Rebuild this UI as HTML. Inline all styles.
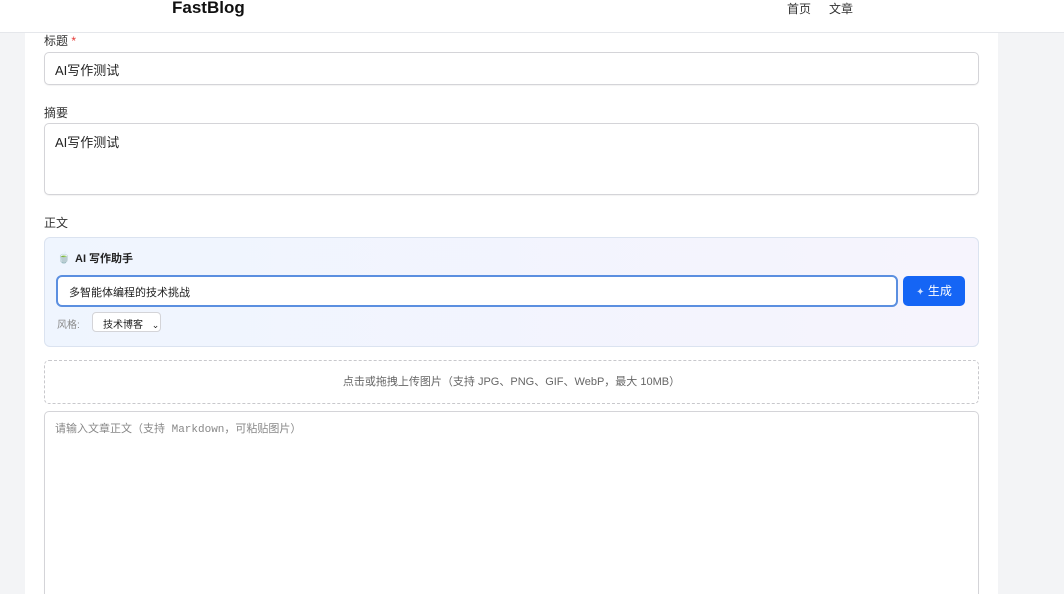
<!DOCTYPE html>
<html style="width:1064px;height:594px;overflow:hidden"><head><meta charset="utf-8"><style>
*{box-sizing:border-box;margin:0;padding:0}
body{width:1064px;height:594px;overflow:hidden;background:#f3f4f6;font-family:"Liberation Sans","Noto Sans CJK SC",sans-serif;color:#222;position:relative}
.hdr{position:absolute;left:0;top:0;width:1064px;height:33px;background:#fff;border-bottom:1px solid #e5e7eb;z-index:2}
.logo{position:absolute;left:172px;top:-2px;font-size:17px;font-weight:bold;color:#111}
.nav{position:absolute;top:0;font-size:12px;color:#333}
.card{position:absolute;left:25px;top:33px;width:973px;height:561px;background:#fff}
.abs{position:absolute}
.lbl{font-size:12px;color:#333}
.inp{border:1px solid #d4d4d8;border-radius:5px;background:#fff;box-shadow:0 1px 1px rgba(0,0,0,.05)}
</style></head><body>
<div class="hdr"><div class="logo">FastBlog</div><div class="nav" style="left:787px">首页</div><div class="nav" style="left:829px">文章</div></div>
<div class="card"></div>
<div class="abs lbl" style="left:44px;top:32px">标题 <span style="color:#e53935">*</span></div>
<div class="abs inp" style="left:44px;top:52px;width:935px;height:33px;font-size:13px;padding:7px 10px">AI写作测试</div>
<div class="abs lbl" style="left:44px;top:104px">摘要</div>
<div class="abs inp" style="left:44px;top:123px;width:935px;height:72px;font-size:13px;padding:8px 10px">AI写作测试</div>
<div class="abs lbl" style="left:44px;top:214px">正文</div>
<div class="abs" style="left:44px;top:237px;width:935px;height:110px;border:1px solid #dbe3f0;border-radius:6px;background:linear-gradient(90deg,#eff5fe,#f6f4fd)"></div>
<div class="abs" style="left:57px;top:251px;font-size:11px">🍵</div>
<div class="abs" style="left:75px;top:250px;font-size:11px;font-weight:bold;color:#222">AI 写作助手</div>
<div class="abs" style="left:56px;top:275px;width:842px;height:32px;border:2px solid #5b8fe0;border-radius:6px;background:#fff;font-size:11px;padding:7px 11px;color:#222">多智能体编程的技术挑战</div>
<div class="abs" style="left:903px;top:276px;width:62px;height:30px;border-radius:5px;background:#1565f5;color:#fff;font-size:12px;text-align:center;line-height:30px"><span style="font-size:10px;color:#cfe0ff">✦</span> 生成</div>
<div class="abs" style="left:57px;top:316px;font-size:10px;color:#888">风格:</div>
<div class="abs" style="left:92px;top:312px;width:69px;height:20px;border:1px solid #d4d4d8;border-radius:4px;background:#fff;font-size:10px;padding:3px 0 0 10px">技术博客 <span style="margin-left:6px;font-size:9px">⌄</span></div>
<div class="abs" style="left:44px;top:360px;width:935px;height:44px;border:1px dashed #c8c8cc;border-radius:5px;font-size:11px;color:#666;text-align:center;line-height:42px">点击或拖拽上传图片（支持 JPG、PNG、GIF、WebP，最大 10MB）</div>
<div class="abs inp" style="left:44px;top:411px;width:935px;height:200px;font-family:'Liberation Mono','Noto Sans CJK SC',monospace;font-size:11px;color:#888;padding:8px 10px">请输入文章正文（支持 Markdown，可粘贴图片）</div>
</body></html>
